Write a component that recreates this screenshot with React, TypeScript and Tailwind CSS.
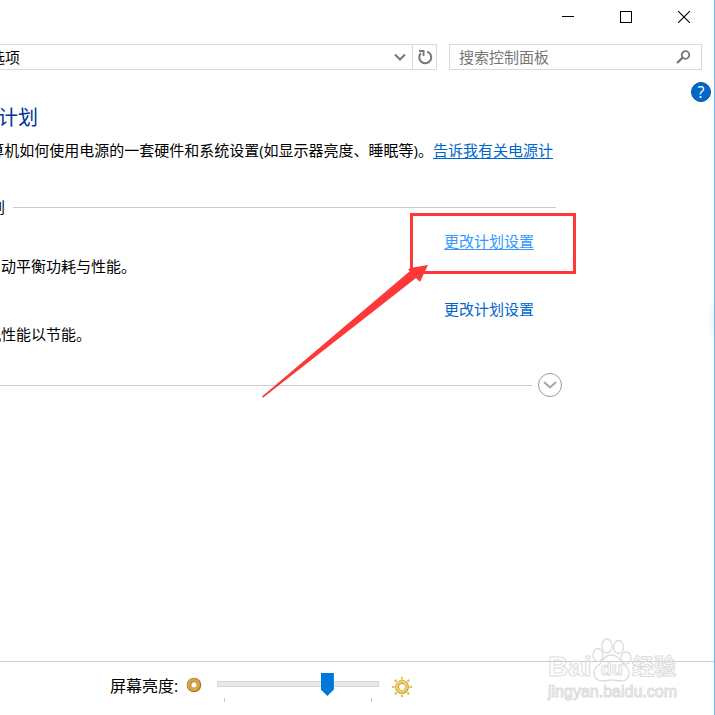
import React, { useState } from 'react';

interface PlanRowProps {
  description: string;
  textWidth: string;
  linkClass: string;
  children?: React.ReactNode;
}

// Right-aligned text that runs off the left edge of the window
const ClippedText: React.FC<{ className: string; children: React.ReactNode }> = ({ className, children }) => (
  <span className={`flex shrink-0 justify-end overflow-hidden whitespace-nowrap ${className}`}>
    <span>{children}</span>
  </span>
);

const PlanRow: React.FC<PlanRowProps> = ({ description, textWidth, linkClass, children }) => (
  <div className="flex flex-col gap-px">
    <div className="flex h-6 justify-end pr-[22px]">
      <div className="relative">
        <a href="#plan" className={linkClass}>更改计划设置</a>
        {children}
      </div>
    </div>
    <ClippedText className={textWidth}>{description}</ClippedText>
  </div>
);

const Annotation: React.FC = () => (
  <div className="pointer-events-none absolute -left-[34px] -top-4 h-[61px] w-[166px] border-[3px] border-[#fd3838]">
    <svg className="absolute -left-[151px] top-[48px]" width="168" height="136" viewBox="0 0 168 136" fill="#fd3838">
      <path d="M0 132.5 L148 7 L146 6 L148 4 L166 1 L158 18 L154 14 L1 133.8 Z" />
    </svg>
  </div>
);

const Watermark: React.FC = () => (
  <div className="pointer-events-none absolute bottom-[14px] right-[38px] flex w-[128px] flex-col text-transparent [-webkit-text-stroke:1px_#dcdcdc]" style={{ fontFamily: '"Liberation Sans", "Noto Sans CJK SC", sans-serif' }}>
    <div className="flex h-[45px] items-end justify-between font-bold leading-8">
      <span className="text-[28px]">Bai</span>
      <span className="relative flex h-[45px] w-9 items-end justify-center pb-1 text-[18px] leading-5">
        <svg className="absolute -left-[3px] top-0" width="42" height="45" viewBox="0 0 42 45" fill="none" stroke="#dcdcdc" strokeWidth="1.3">
          <ellipse cx="7" cy="17" rx="5" ry="6.5" />
          <ellipse cx="16" cy="8" rx="5" ry="7" />
          <ellipse cx="27.5" cy="9" rx="5" ry="6.5" />
          <ellipse cx="35" cy="20" rx="5" ry="6" />
          <path d="M20 17c-7 0-9 7-12 10-8 5-6 16 4 16 4 0 5-1 9-1s5 1 9 1c9 0 11-11 3-16-4-4-5-10-13-10Z" />
        </svg>
        du
      </span>
      <span className="text-[22px]">经验</span>
    </div>
    <span className="text-[16px] leading-[18px]">jingyan.baidu.com</span>
  </div>
);

const App: React.FC = () => {
  const [brightness, setBrightness] = useState(70);
  const [query, setQuery] = useState('');

  return (
    <div className="relative flex min-h-screen flex-col overflow-hidden border-r border-[#78b5ed] bg-white text-[15px] leading-6 text-black" style={{ fontFamily: '"Open Sans", "Noto Sans CJK SC", sans-serif' }}>
      {/* Title bar */}
      <header className="flex h-[34px] justify-end pr-px">
        <button aria-label="最小化" className="flex w-[58px] items-center justify-center">
          <svg width="12" height="12" stroke="#000" shapeRendering="crispEdges"><path d="M0 5.5h12" /></svg>
        </button>
        <button aria-label="最大化" className="flex w-[58px] items-center justify-center">
          <svg width="12" height="12" fill="none" stroke="#000" shapeRendering="crispEdges"><path d="M.5.5h11v11H.5z" /></svg>
        </button>
        <button aria-label="关闭" className="flex w-[58px] items-center justify-center">
          <svg width="12" height="12" stroke="#000" strokeWidth="1.1"><path d="M0 0l12 12M12 0L0 12" /></svg>
        </button>
      </header>

      {/* Address bar and search */}
      <div className="mt-[10px] flex h-[26px] gap-3 pr-3">
        <div className="flex min-w-0 flex-1 items-center border-y border-r border-[#d9d9d9]">
          <ClippedText className="w-5">选项</ClippedText>
          <button aria-label="历史位置" className="ml-auto flex w-6 items-center justify-center self-stretch">
            <svg width="12" height="8" fill="none" stroke="#767676" strokeWidth="2"><path d="M1 1.5l5 5 5-5" /></svg>
          </button>
          <button aria-label="刷新" className="flex w-6 items-center justify-center self-stretch border-l border-[#d9d9d9]">
            <svg width="16" height="16" viewBox="0 0 16 16" fill="none" stroke="#767676" strokeWidth="2">
              <path d="M10.2 2.6a6 6 0 1 1-6.4 1.6" />
              <path d="M2 2h4.600v5" strokeWidth="1.8" />
            </svg>
          </button>
        </div>
        <label className="flex w-[253px] items-center border border-[#d9d9d9] pl-[9px] pr-[10px]">
          <input
            aria-label="搜索控制面板"
            placeholder="搜索控制面板"
            value={query}
            onChange={(e) => setQuery(e.target.value)}
            className="h-6 min-w-0 flex-1 outline-none placeholder:text-[#767676]"
          />
          <svg width="16" height="14" viewBox="0 0 16 14" fill="none" stroke="#767676" strokeWidth="1.8">
            <circle cx="10.5" cy="5" r="3.8" />
            <path d="M7.7 7.6L2 13" strokeWidth="2.2" />
          </svg>
        </label>
      </div>

      <main className="flex-1">
        <div className="mt-3 flex h-5 justify-end pr-[3px]">
          <button aria-label="帮助" className="flex h-5 w-5 items-center justify-center rounded-full border border-[#0a4f94] bg-[#0068c9] text-[16px] leading-4 text-white">?</button>
        </div>

        <h1 className="mt-[3px] text-[20px] leading-[26px] text-[#003399]">
          <ClippedText className="w-[38px]">计划</ClippedText>
        </h1>

        <p className="mt-[7px] flex whitespace-nowrap">
          <ClippedText className="w-[433px]">算机如何使用电源的一套硬件和系统设置(如显示器亮度、睡眠等)。</ClippedText>
          <a href="#tell" className="text-[#0066cc] underline underline-offset-2">告诉我有关电源计</a>
        </p>

        <section className="mt-[33px] w-full max-w-[556px]">
          <h2 className="flex items-center gap-2">
            <ClippedText className="w-[5px]">划</ClippedText>
            <span className="h-px flex-1 bg-[#cccccc]" />
          </h2>
          <div className="mt-[10px] flex flex-col gap-[19px]">
            <PlanRow description="自动平衡功耗与性能。" textWidth="w-[136px]" linkClass="text-[#3399ff] underline underline-offset-2">
              <Annotation />
            </PlanRow>
            <PlanRow description="机性能以节能。" textWidth="w-[91px]" linkClass="text-[#0066cc]" />
          </div>
        </section>

        <div className="mt-[27px] flex w-full max-w-[562px] items-center gap-[6px]">
          <span className="h-px flex-1 bg-[#cccccc]" />
          <button aria-label="显示附加计划" className="flex h-6 w-6 items-center justify-center rounded-full border border-[#999999]">
            <svg width="14" height="8" fill="none" stroke="#a6a6a6" strokeWidth="2"><path d="M1 1l6 5.5L13 1" /></svg>
          </button>
        </div>
      </main>

      {/* Brightness */}
      <footer className="flex h-[54px] items-start border-t border-[#cccccc] pl-[110px] pt-3">
        <label htmlFor="brightness" className="w-[76px] text-[16px]">屏幕亮度:</label>
        <svg className="mt-[3px]" width="16" height="16" viewBox="0 0 16 16" fill="none">
          <circle cx="8" cy="8" r="5" stroke="#a97723" strokeWidth="4.6" />
          <circle cx="7.6" cy="7.6" r="4.8" stroke="#d8a548" strokeWidth="3.2" />
        </svg>
        <div className="ml-[15px] w-[162px]">
          <input
            id="brightness"
            type="range"
            value={brightness}
            onChange={(e) => setBrightness(Number(e.target.value))}
            className="mb-1 block h-5 w-full appearance-none bg-transparent [&::-webkit-slider-runnable-track]:h-[6px] [&::-webkit-slider-runnable-track]:border [&::-webkit-slider-runnable-track]:border-[#d6d6d6] [&::-webkit-slider-runnable-track]:bg-[#e7eaea] [&::-webkit-slider-thumb]:-mt-[9px] [&::-webkit-slider-thumb]:h-[23px] [&::-webkit-slider-thumb]:w-[13px] [&::-webkit-slider-thumb]:appearance-none [&::-webkit-slider-thumb]:bg-[#0078d7] [&::-webkit-slider-thumb]:[clip-path:polygon(0_0,100%_0,100%_72%,50%_100%,0_72%)]"
          />
          <div className="flex justify-between px-[7px]">
            <span className="h-1 w-px bg-[#c4c4c4]" />
            <span className="h-1 w-px bg-[#c4c4c4]" />
          </div>
        </div>
        <svg className="ml-3 mt-[2px]" width="22" height="22" viewBox="0 0 22 22" fill="none">
          <path d="M11 1v2.5M11 18.5V21M1 11h2.5M18.5 11H21M3.8 3.8l1.8 1.8M16.4 16.4l1.8 1.8M3.8 18.2l1.8-1.8M16.4 5.6l1.8-1.8" stroke="#e8c33c" strokeWidth="2.2" />
          <circle cx="11" cy="11" r="5" stroke="#c99f45" strokeWidth="4" />
          <circle cx="10.7" cy="10.7" r="4.9" stroke="#f0d06c" strokeWidth="2.6" />
        </svg>
      </footer>

      {/* Shadow of the flyout just off the right edge */}
      <div className="pointer-events-none absolute -right-4 top-[302px] h-9 w-[14px] rounded-full shadow-[0_0_8px_1px_#d8d8dc]" />
      <Watermark />
    </div>
  );
};

export default App;
